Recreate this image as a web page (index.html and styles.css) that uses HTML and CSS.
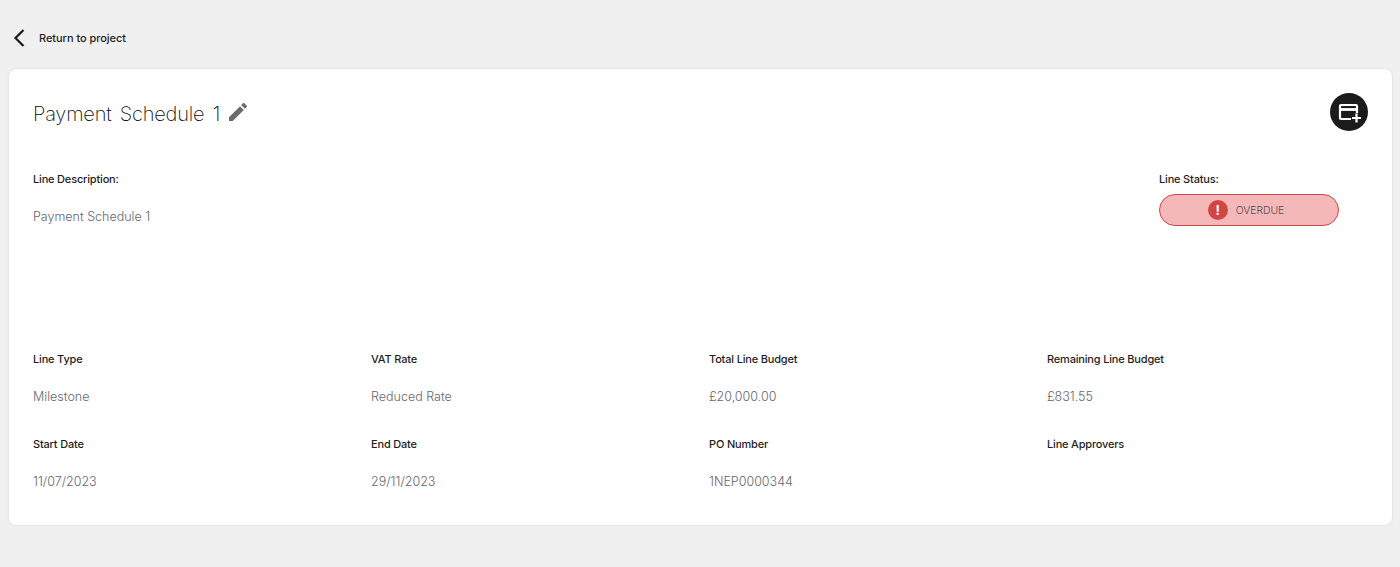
FILE: index.html
```html
<!DOCTYPE html>
<html lang="en">
<head>
<meta charset="utf-8">
<title>Payment Schedule 1</title>
<link rel="stylesheet" href="styles.css">
</head>
<body>
<a class="back" href="#">
  <svg class="back-icon" width="14" height="20" viewBox="0 0 14 20"><path d="M11.5 2 3.5 10l8 8" fill="none" stroke="#1a1a1a" stroke-width="2.2"/></svg>
  <span>Return to project</span>
</a>
<main class="card">
  <header class="card-head">
    <div class="title-wrap">
      <h1 class="title">Payment Schedule 1</h1>
      <svg class="edit" width="24" height="24" viewBox="0 0 24 24"><path fill="#6b6b6b" d="M3 17.25V21h3.75L17.81 9.94l-3.75-3.75L3 17.25zM20.71 7.04a1 1 0 0 0 0-1.41l-2.34-2.34a1 1 0 0 0-1.41 0l-1.83 1.83 3.75 3.75 1.83-1.83z"/></svg>
    </div>
    <button class="fab" aria-label="Add payment">
      <svg width="24" height="24" viewBox="0 0 24 24"><path fill="none" stroke="#fff" stroke-width="2.200" d="M14 19H4A1 1 0 0 1 3 18V6A1 1 0 0 1 4 5h15A1 1 0 0 1 20 6V13"/><path stroke="#fff" stroke-width="2.800" d="M3 9.500h17"/><path stroke="#fff" stroke-width="2.200" d="M15 18h9M19.500 13.500v9"/></svg>
    </button>
  </header>
  <section class="summary">
    <div class="desc">
      <div class="label">Line Description:</div>
      <div class="value">Payment Schedule 1</div>
    </div>
    <div class="status">
      <div class="label">Line Status:</div>
      <div class="pill">
        <span class="pill-icon">!</span>
        <span class="pill-text">OVERDUE</span>
      </div>
    </div>
  </section>
  <section class="grid">
    <div class="field"><div class="label">Line Type</div><div class="value">Milestone</div></div>
    <div class="field"><div class="label">VAT Rate</div><div class="value">Reduced Rate</div></div>
    <div class="field"><div class="label">Total Line Budget</div><div class="value">£20,000.00</div></div>
    <div class="field"><div class="label">Remaining Line Budget</div><div class="value">£831.55</div></div>
    <div class="field"><div class="label">Start Date</div><div class="value">11/07/2023</div></div>
    <div class="field"><div class="label">End Date</div><div class="value">29/11/2023</div></div>
    <div class="field"><div class="label">PO Number</div><div class="value">1NEP0000344</div></div>
    <div class="field"><div class="label">Line Approvers</div></div>
  </section>
</main>
</body>
</html>
```
FILE: styles.css
```css
* { box-sizing: border-box; }
html, body { margin: 0; height: 100%; }
body {
  background: #f0f0f0;
  font-family: Inter, "Liberation Sans", sans-serif;
  color: #1e1e1e;
  padding: 0 8px 0 9px;
  overflow: hidden;
}
.back {
  display: flex;
  align-items: center;
  height: 69px;
  padding: 7px 0 0 3px;
  color: #1e1e1e;
  text-decoration: none;
  font-size: 11px;
  font-weight: 500;
  letter-spacing: -.05px;
}
.back-icon { margin-right: 13px; }
.card {
  height: 456px;
  background: #fff;
  border-radius: 7px;
  box-shadow: 0 0 2px rgba(0,0,0,.16);
  padding: 24px 24px 0;
}
.card-head {
  display: flex;
  justify-content: space-between;
  align-items: center;
  height: 38px;
}
.title-wrap { display: flex; align-items: center; gap: 6px; }
.title {
  margin: 4px 0 0;
  font-size: 20px;
  font-weight: 200;
  letter-spacing: -.2px;
  word-spacing: 3px;
  color: #0c0c0c;
}
.fab {
  width: 38px;
  height: 38px;
  border: 0;
  padding: 0;
  border-radius: 50%;
  background: #1b1b1b;
  display: flex;
  align-items: center;
  justify-content: center;
}
.label { font-size: 11px; font-weight: 500; line-height: 16px; letter-spacing: -.18px; color: #1e1e1e; }
.value { font-size: 12.500px; font-weight: 300; line-height: 16px; color: #66666e; margin-top: 22px; }
.summary {
  display: flex;
  justify-content: space-between;
  margin-top: 40px;
  height: 180px;
  padding-right: 29px;
}
.status { width: 180px; }
.pill {
  margin-top: 7px;
  height: 32px;
  border: 1px solid #d04545;
  border-radius: 16px;
  background: #f4b8b8;
  display: flex;
  align-items: center;
  justify-content: center;
  gap: 8px;
  padding-right: 6px;
}
.pill-icon {
  width: 20px;
  height: 20px;
  border-radius: 50%;
  background: #d24545;
  color: #fff;
  font-size: 13px;
  font-weight: 700;
  line-height: 20px;
  text-align: center;
}
.pill-text { font-size: 10.400px; font-weight: 300; color: #5a4a52; }
.grid {
  display: grid;
  grid-template-columns: repeat(4, 338px);
  grid-auto-rows: 85px;
}
```
